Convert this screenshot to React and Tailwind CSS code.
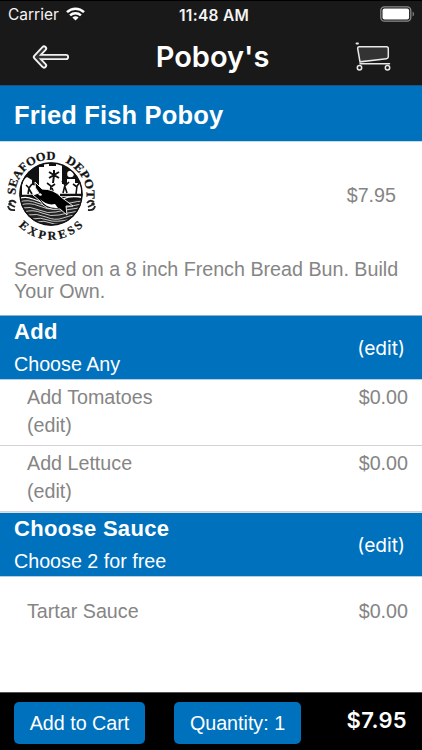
const ADDONS = [
  { name: 'Add Tomatoes', price: '$0.00' },
  { name: 'Add Lettuce', price: '$0.00' },
];

function StatusBar() {
  return (
    <div className="relative flex h-[30px] items-center justify-between border-t border-black pl-[8px] pr-[7px] font-['Inter'] text-[#f4f4f4]">
      <div className="flex items-center gap-[7px] pb-[1px]">
        <span className="text-[15.5px]">Carrier</span>
        <svg width="19" height="14" viewBox="0 0 19 14" fill="none" stroke="#fff" strokeWidth="2.5" className="mb-[2px]">
          <path d="M1 5.2C5.8 0.6 13.2 0.6 18 5.2" />
          <path d="M4.1 8.4C7.1 5.6 11.9 5.6 14.9 8.4" />
          <path d="M6.4 10.4C8.1 8.9 10.9 8.9 12.6 10.4L9.5 13.6Z" fill="#fff" stroke="none" />
        </svg>
      </div>
      <span className="absolute left-[179px] top-[5px] text-[15.5px] font-semibold leading-[19px] tracking-[0.3px]">
        11:48 AM
      </span>
      <svg width="35" height="16" viewBox="0 0 35 16" fill="none" className="mb-[3px]">
        <rect x="0.8" y="0.8" width="30" height="14.4" rx="3.6" stroke="#8b8b8b" strokeWidth="1.3" />
        <rect x="2.5" y="2.5" width="26.6" height="11" rx="2" fill="#fff" />
        <path d="M32.6 5.5C34.4 6.4 34.4 9.6 32.6 10.5Z" fill="#8b8b8b" />
      </svg>
    </div>
  );
}

function NavBar() {
  return (
    <div className="flex h-[55px] items-center justify-between pb-[2px] pl-[32px] pr-[30px]">
      <svg width="38" height="26" viewBox="0 0 38 26" fill="none" strokeLinecap="round" strokeLinejoin="round">
        <path d="M12 4.500L4 13L12 21.500M4.500 13H34" stroke="#f2f2f2" strokeWidth="6.2" />
        <path d="M12 4.500L4 13L12 21.500M4.500 13H34" stroke="#333" strokeWidth="2.4" />
      </svg>
      <h1 className="font-['Inter'] text-[29px] font-semibold leading-[36px]">Poboy's</h1>
      <svg width="37" height="30" viewBox="0 0 37 30" fill="none" stroke="#e8e8e8" strokeLinecap="round">
        <path d="M1.5 1.5H3" strokeWidth="1.8" />
        <path d="M4.3 4.7H31.5Q33.3 4.7 33.3 6.5V14.8Q33.3 16.5 31.5 16.7L5 19.8L2.7 6.7Q2.5 4.7 4.3 4.7Z" fill="#333" strokeWidth="1.5" />
        <path d="M5 21.7H34.5" strokeWidth="1.5" />
        <circle cx="4.5" cy="25.7" r="2.2" strokeWidth="1.5" />
        <circle cx="32.5" cy="25.7" r="2.2" strokeWidth="1.5" />
      </svg>
    </div>
  );
}

// Round badge: city skyline and figures above, fish jumping out of the waves below
function DepotLogo() {
  return (
    <svg width="94" height="94" viewBox="0 0 94 94" className="shrink-0">
      <defs>
        <clipPath id="badge">
          <circle cx="46" cy="46" r="31.5" />
        </clipPath>
        <path id="arcTop" d="M10.6 51A35.6 35.6 0 1 1 81.4 51" />
        <path id="arcBottom" d="M2 56A45 45 0 0 0 90 56" />
      </defs>
      <circle cx="46" cy="46" r="31.5" fill="#111" />
      <g clipPath="url(#badge)">
        <path d="M17 49V36L18 35V32L22 29L27 32V37L34 38V19H39V16H44V18H51V16H57V36H62V31H70V35H76V49Z" fill="#fff" />
        <circle cx="65.5" cy="26" r="3.3" fill="#fff" />
        <path d="M49 27L48 35M49 27L44 24M49 27L54 24M49 27L44 30M49 27L54 30M49 27V22" stroke="#111" strokeWidth="2" />
        <g stroke="#111" fill="none" strokeWidth="1.6">
          <path d="M23 46L24 40L21 37M24 40L27 36M24 41L27 46" />
          <path d="M45 46L46 38L42 35M46 39L50 36M47 40L49 46" />
          <path d="M58 45L60 37L57 33M60 38L64 34M60 39L62 45" />
          <path d="M71 46L72 38L75 34M72 39L68 36" />
          <path d="M14 48H34M55 47H79" strokeWidth="2.4" />
        </g>
        <path d="M13 52Q22 49 31 52T50 54T79 51V80H13Z" fill="#222" />
        <g stroke="#fff" strokeWidth="0.75" fill="none">
          <path d="M14 50.5Q21 48 28 51T42 55M58 51Q67 47 78 50" strokeWidth="1.2" />
          <path d="M14 54Q23 51 32 55T49 58T65 55T79 53" />
          <path d="M15 57Q25 54 34 58T51 61T67 58T78 56" />
          <path d="M17 60Q25 58 34 62T51 64T67 61T78 59" />
          <path d="M19 64Q28 61 37 65T54 67T74 63" />
          <path d="M22 67Q32 65 41 69T58 70T71 67" />
          <path d="M27 71Q36 69 43 72T67 71" />
          <path d="M32 74Q39 72 46 75T61 74" />
        </g>
        <path d="M30 34L37 41Q49 41 56 49L68 58L61 58L62 67L55 61Q40 63 35 53L28 47L34 45Q29 40 30 34Z" fill="#000" stroke="#fff" strokeWidth="0.9" />
        <path d="M33 46Q36 44 37 47Q35 49 33 46ZM35 51Q42 58 50 56L53 60Q41 61 35 51Z" fill="#fff" />
      </g>
      <circle cx="46" cy="46" r="31" fill="none" stroke="#111" strokeWidth="1.4" />
      <g className="font-['Liberation_Serif'] text-[12px] font-bold" fill="#111" stroke="#111" strokeWidth="0.25">
        <text textLength="60" lengthAdjust="spacingAndGlyphs">
          <textPath href="#arcTop" startOffset="4">SEAFOOD</textPath>
        </text>
        <text textLength="45" lengthAdjust="spacingAndGlyphs">
          <textPath href="#arcTop" startOffset="74">DEPOT</textPath>
        </text>
        <text textLength="72" lengthAdjust="spacing">
          <textPath href="#arcBottom" startOffset="25">EXPRESS</textPath>
        </text>
      </g>
      <g fill="none" stroke="#222" strokeWidth="1.8">
        <path d="M4 54Q8 51 11 55M3 58Q4 63 10 62M6 57L10 59" />
        <path d="M89 54Q85 51 82 55M90 58Q89 63 83 62M87 57L83 59" />
      </g>
      <g fill="#222">
        <circle cx="5" cy="56" r="1.8" />
        <circle cx="88" cy="56" r="1.8" />
      </g>
    </svg>
  );
}

function SectionHeader({ title, hint }) {
  return (
    <div className="flex h-[64px] items-center justify-between border-b border-[#b5cfe2] bg-[#0071bd] pl-[14px] pr-[17px] text-white">
      <div className="pt-[1px]">
        <h2 className="text-[22px] font-bold leading-[32px] tracking-[0.3px]">{title}</h2>
        <p className="leading-[32px]">{hint}</p>
      </div>
      <span className="pt-[2px] font-['Inter'] text-[19.2px]">(edit)</span>
    </div>
  );
}

function AddonRow({ name, price }) {
  return (
    <div className="flex h-[66px] justify-between border-b border-[#d5d1d4] pl-[27px] pr-[14px] pt-[3px] leading-[28px]">
      <div>
        <div>{name}</div>
        <div>(edit)</div>
      </div>
      <div>{price}</div>
    </div>
  );
}

export default function App() {
  return (
    <div className="flex h-[750px] w-[422px] flex-col overflow-hidden bg-white font-['Liberation_Sans',sans-serif] text-[19.7px] text-[#858585]">
      <header className="h-[85px] shrink-0 bg-[#191919] text-white">
        <StatusBar />
        <NavBar />
      </header>

      <div className="flex h-[57px] shrink-0 items-center border-b border-t border-b-[#c9d8e5] border-t-[#1d5580] bg-[#0071bd] pl-[14px] pt-[3px]">
        <h2 className="text-[25.5px] font-bold tracking-[0.15px] text-white">Fried Fish Poboy</h2>
      </div>

      <main className="flex-1">
        <div className="flex items-center justify-between pl-[5px] pr-[26px] pt-[6px]">
          <DepotLogo />
          <span className="pt-[1px]">$7.95</span>
        </div>
        <p className="mt-[16px] h-[57px] px-[14px] leading-[22px]">
          Served on a 8 inch French Bread Bun. Build Your Own.
        </p>

        <div className="h-px bg-[#8fb3cd]" />
        <SectionHeader title="Add" hint="Choose Any" />
        {ADDONS.map((a) => (
          <AddonRow key={a.name} {...a} />
        ))}
        <div className="h-px bg-[#d9dfe4]" />
        <SectionHeader title="Choose Sauce" hint="Choose 2 for free" />
        <div className="flex items-center justify-between pl-[27px] pr-[14px] pt-[20px]">
          <span>Tartar Sauce</span>
          <span>$0.00</span>
        </div>
      </main>

      <footer className="flex h-[58px] shrink-0 items-start border-t border-[#555] bg-black pl-[14px] pr-[15px] pt-[9px] text-white">
        <button className="h-[42px] w-[131px] rounded-[5px] bg-[#0071bd] pt-[2px]">Add to Cart</button>
        <button className="ml-[29px] h-[42px] w-[127px] rounded-[5px] bg-[#0071bd] pt-[2px]">Quantity: 1</button>
        <span className="ml-auto font-['Inter'] text-[22px] font-semibold leading-[37px] tracking-[0.3px]">$7.95</span>
      </footer>
    </div>
  );
}
